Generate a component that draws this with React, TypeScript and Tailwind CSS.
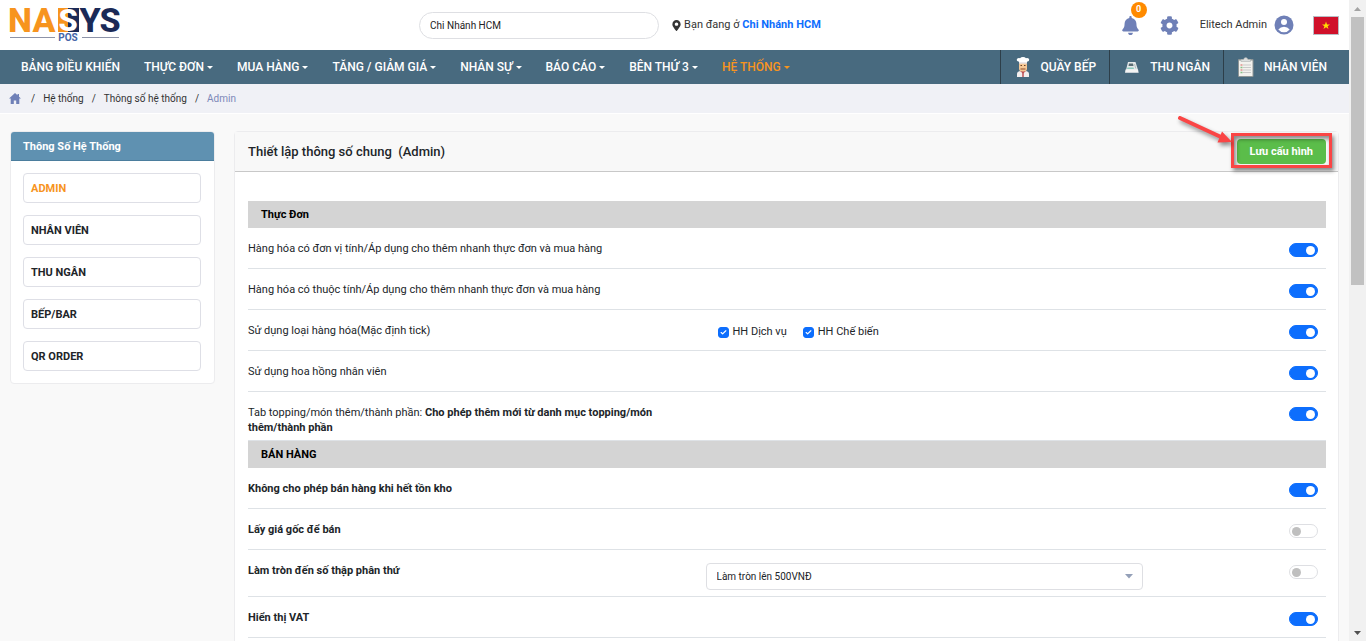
import React, { useState } from 'react';
import { FaBell, FaCog, FaMapMarkerAlt } from 'react-icons/fa';
import { Check } from 'lucide-react';

const menuItems = [
  { label: 'BẢNG ĐIỀU KHIỂN', caret: false },
  { label: 'THỰC ĐƠN', caret: true },
  { label: 'MUA HÀNG', caret: true },
  { label: 'TĂNG / GIẢM GIÁ', caret: true },
  { label: 'NHÂN SỰ', caret: true },
  { label: 'BÁO CÁO', caret: true },
  { label: 'BÊN THỨ 3', caret: true },
  { label: 'HỆ THỐNG', caret: true, active: true },
];

const sideItems = ['ADMIN', 'NHÂN VIÊN', 'THU NGÂN', 'BẾP/BAR', 'QR ORDER'];

const Logo = () => (
  <svg width="124" height="50" viewBox="0 0 124 50" role="img" aria-label="NASYS POS">
    <rect x="58" y="8" width="10" height="24" fill="#f7941e" />
    <rect x="68" y="8" width="11" height="24" fill="#1b2a57" />
    <g fontFamily="Roboto, sans-serif" fontWeight="800" fontSize="34" textAnchor="middle">
      <text x="20" y="32" fill="#f7941e">N</text>
      <text x="44" y="32" fill="#f7941e">A</text>
      <text x="68" y="31" fontSize="31" fill="#ffffff">S</text>
      <text x="90" y="32" fill="#1b2a57">Y</text>
      <text x="110" y="32" fill="#1b2a57">S</text>
    </g>
    <path d="M10 37.5h45M82 37.5h37" stroke="#8d93a8" />
    <text x="68" y="41" textAnchor="middle" fontFamily="Roboto, sans-serif" fontWeight="700" fontSize="10" fill="#4565a8">POS</text>
  </svg>
);

const Caret = () => (
  <svg width="6" height="3" viewBox="0 0 6 3" className="ml-[3px]" aria-hidden="true">
    <path d="M0 0h6L3 3z" fill="currentColor" />
  </svg>
);

const ChefIcon = () => (
  <svg width="20" height="20" viewBox="0 0 20 20" aria-hidden="true">
    <path d="M4 20v-3q0-2.500 3-3h6q3 .5 3 3v3z" fill="#f4eeee" />
    <path d="M7 14h6l-3 2.500z" fill="#b9454b" />
    <path d="M9.300 16h1.400v4H9.300z" fill="#b9454b" />
    <rect x="6" y="5" width="8" height="9.500" rx="3" fill="#f5c795" />
    <path d="M7.500 11.500h5v1h-5z" fill="#8a4a2c" />
    <path d="M7.500 8.500h1.500M11 8.500h1.500" stroke="#6b4326" />
    <path d="M6 6.500V4.800Q3.500 4.500 3.800 2.500 4.500.8 7 1.200 8 0 10 0t3 1.200q2.500-.4 3.200 1.300.3 2-2.200 2.300v1.700z" fill="#fff" />
    <path d="M6 6h8" stroke="#d5cdd0" />
  </svg>
);

const RegisterIcon = () => (
  <svg width="20" height="20" viewBox="0 0 20 20" aria-hidden="true">
    <path d="M6 5h7.500l2.500 8H4z" fill="#e4e9ea" />
    <path d="M7 6.500h4l.5 2.500H6.500z" fill="#5a6d74" />
    <path d="M5.500 10.500h6l.5 1.500H5z" fill="#8ccabd" />
    <path d="M12.500 7l1.300 4.500" stroke="#b5bdbf" />
    <path d="M3.500 12.500h12.500l.7 3.300H3z" fill="#f4f4f4" />
  </svg>
);

const ClipboardIcon = () => (
  <svg width="20" height="20" viewBox="0 0 20 20" aria-hidden="true">
    <rect x="2" y="2" width="15.500" height="18" rx="1" fill="#8f9696" />
    <rect x="3" y="3.500" width="13.500" height="15.500" fill="#f3f2ee" />
    <path d="M5 4.500V2.500h2.500Q8 .5 9.700.5t2.200 2h2.600v2z" fill="#dcdede" stroke="#a3a8a8" strokeWidth=".5" />
    <path d="M7 8h8M7 10.500h8M7 13h8M7 15.500h8" stroke="#c9c9c9" />
    <path d="M4.500 8h2M4.500 13h2" stroke="#e0908a" strokeWidth="1.500" />
    <path d="M4.500 10.500h2M4.500 15.500h2" stroke="#88c087" strokeWidth="1.500" />
  </svg>
);

const quickLinks = [
  { label: 'QUẦY BẾP', icon: <ChefIcon /> },
  { label: 'THU NGÂN', icon: <RegisterIcon /> },
  { label: 'NHÂN VIÊN', icon: <ClipboardIcon /> },
];

const Switch = ({ id, defaultOn }: { id: string; defaultOn: boolean }) => {
  const [on, setOn] = useState(defaultOn);
  return (
    <input
      id={id}
      type="checkbox"
      role="switch"
      checked={on}
      onChange={() => setOn(!on)}
      className="flex h-3.5 w-[29px] shrink-0 cursor-pointer appearance-none items-center rounded-full border border-[#dedfe3] bg-white px-0.5 before:size-[9px] before:rounded-full before:bg-[#bfbfbf] before:content-[''] checked:justify-end checked:border-[#0d6efd] checked:bg-[#0d6efd] checked:before:bg-white"
    />
  );
};

const TickBox = ({ label }: { label: string }) => (
  <label className="flex cursor-pointer items-center gap-1 text-[11px]">
    <span className="relative flex">
      <input type="checkbox" defaultChecked className="peer size-[11px] appearance-none rounded-[3px] border border-[#bfbfbf] checked:border-[#0d6efd] checked:bg-[#0d6efd]" />
      <Check size={7} strokeWidth={4} className="pointer-events-none absolute left-0.5 top-0.5 hidden text-white peer-checked:block" />
    </span>
    {label}
  </label>
);

interface RowProps {
  id: string;
  label: React.ReactNode;
  on?: boolean;
  children?: React.ReactNode;
}

const SettingRow = ({ id, label, on = true, children }: RowProps) => (
  <div className="grid min-h-[41px] grid-cols-12 gap-x-5 border-b border-[#dee2e6] pb-[5px] pt-[13px]">
    <label htmlFor={id} className="col-span-5 leading-[15px]">{label}</label>
    <div className="col-span-5">{children}</div>
    <div className="col-span-2 flex items-start justify-end pr-2 pt-0.5">
      <Switch id={id} defaultOn={on} />
    </div>
  </div>
);

const SectionTitle = ({ children }: { children: React.ReactNode }) => (
  <h2 className="bg-[#d4d4d4] px-[13px] text-[11px] font-bold leading-[27px] text-black">{children}</h2>
);

const Header = () => (
  <header className="flex h-[50px] items-center bg-white pr-2.5 text-[11px] text-[#333]">
    <div className="w-[31.3%]">
      <a href="#" className="block w-fit"><Logo /></a>
    </div>
    <select aria-label="Chi nhánh" className="h-[27px] w-60 appearance-none rounded-full border border-[#dedfe3] bg-white px-2.5 text-[10px] text-[#222]">
      <option>Chi Nhánh HCM</option>
    </select>
    <p className="ml-3 flex items-center gap-0.5 whitespace-nowrap">
      <FaMapMarkerAlt size={11} />
      <span>Bạn đang ở <a href="#" className="font-bold text-[#0d6efd]">Chi Nhánh HCM</a></span>
    </p>

    <div className="ml-auto flex items-center">
      <button aria-label="Thông báo" className="relative mr-5 text-[#6f80b7]">
        <FaBell size={19} />
        <span className="absolute -top-3.5 left-2.5 flex size-4 items-center justify-center rounded-full bg-[#ff8a00] text-[9px] font-bold text-white">0</span>
      </button>
      <button aria-label="Cài đặt" className="mr-[21px] text-[#6f80b7]"><FaCog size={19} /></button>
      <a href="#" className="mr-[19px] flex items-center gap-[7px]">
        Elitech Admin
        <svg width="20" height="20" viewBox="0 0 20 20" className="text-[#6f80b7]" aria-hidden="true">
          <circle cx="10" cy="10" r="9.500" fill="currentColor" />
          <circle cx="10" cy="7" r="3" fill="#fff" />
          <path d="M4.300 14.500Q6.500 11.700 10 11.700t5.700 2.800Q13.500 17.300 10 17.300t-5.700-2.800z" fill="#fff" />
        </svg>
      </a>
      <button aria-label="Tiếng Việt">
        <svg width="26" height="19" viewBox="0 0 26 19" aria-hidden="true">
          <rect x=".5" y=".5" width="25" height="18" fill="#d0102a" stroke="#b9bcc4" />
          <path d="M13 5.500l1 2.900h3l-2.400 1.800.9 2.900-2.500-1.800-2.500 1.800.9-2.900L9 8.400h3z" fill="#ffde00" />
        </svg>
      </button>
    </div>
  </header>
);

const NavBar = () => (
  <nav className="flex h-[34px] items-stretch bg-[#486a7f] pl-[9px] pr-[9px] text-[12px] font-medium text-white">
    {menuItems.map((item) => (
      <a
        key={item.label}
        href="#"
        className={`flex items-center whitespace-nowrap px-3 ${item.active ? 'text-[#f7941e]' : ''}`}
      >
        {item.label}
        {item.caret && <Caret />}
      </a>
    ))}
    <div className="ml-auto flex">
      {quickLinks.map((link) => (
        <a key={link.label} href="#" className="flex items-center gap-2 whitespace-nowrap border-l border-[#2d3e49] pl-3 pr-[13px]">
          {link.icon}
          {link.label}
        </a>
      ))}
    </div>
  </nav>
);

const Breadcrumb = () => (
  <div className="flex h-[30px] items-center gap-2 border-b border-white bg-[#f0f1f6] pl-[9px] text-[10px] text-[#333]">
    <a href="#" aria-label="Trang chủ" className="mr-0.5">
      <svg width="12" height="11" viewBox="0 0 12 11" fill="#6f80b7" aria-hidden="true">
        <path d="M6 0l2.500 2.300V1H10v2.700L12 5.600h-1.700V11H7.200V7.500H4.800V11H1.700V5.600H0z" />
      </svg>
    </a>
    <span>/</span>
    <a href="#">Hệ thống</a>
    <span>/</span>
    <a href="#">Thông số hệ thống</a>
    <span>/</span>
    <span className="text-[#7c88b8]">Admin</span>
  </div>
);

const Sidebar = () => (
  <aside className="w-[205px] shrink-0 overflow-hidden rounded border border-[#ececee] bg-white">
    <h2 className="border-b border-[#4b7d9d] bg-[#5f91b1] px-3 pt-0.5 text-[11px] font-bold leading-[26px] text-white">Thông Số Hệ Thống</h2>
    <ul className="flex flex-col gap-3 py-3 pl-3 pr-[13px]">
      {sideItems.map((item, i) => (
        <li key={item}>
          <a
            href="#"
            className={`flex h-[30px] items-center rounded border border-[#dedfe6] px-[7px] pt-0.5 text-[11px] font-bold ${i === 0 ? 'text-[#f7941e]' : 'text-[#212529]'}`}
          >
            {item}
          </a>
        </li>
      ))}
    </ul>
  </aside>
);

// Red frame and arrow that point at the save button
const SaveCallout = () => (
  <>
    <span className="pointer-events-none absolute -inset-x-1.5 -bottom-1 -top-1.5 border-3 border-[#fa4545] shadow-[2px_3px_4px_rgba(0,0,0,0.45),inset_2px_3px_4px_rgba(0,0,0,0.45)]" />
    <svg width="62" height="36" viewBox="0 0 62 36" className="pointer-events-none absolute -top-6 right-[89px] drop-shadow-[2px_3px_2px_rgba(0,0,0,0.45)]" aria-hidden="true">
      <path d="M5 3L46 22" stroke="#fa4545" strokeWidth="4" strokeLinecap="round" />
      <path d="M47 16.500L57 27l-14.500.5z" fill="#fa4545" />
    </svg>
  </>
);

const App = () => {
  return (
    <div className="flex h-screen overflow-hidden bg-[#f9f9f9] font-[Roboto,'Noto_Sans',sans-serif] text-[#212529]">
      <div className="flex min-w-0 flex-1 flex-col">
        <Header />
        <NavBar />
        <Breadcrumb />

        <main className="flex min-h-0 flex-1 items-start gap-[19px] overflow-hidden px-2.5 pt-[17px]">
          <Sidebar />
          <section className="min-w-0 flex-1 rounded-t border border-[#ececee] bg-white pb-5">
            <div className="flex h-10 items-center justify-between border-b border-[#c8c8c8] bg-[#f8f8f8] pl-[13px] pr-3">
              <h1 className="whitespace-pre text-[13px] font-medium">Thiết lập thông số chung  (Admin)</h1>
              <div className="relative">
                <button className="block h-[25px] rounded bg-[#5bbd4a] px-[13px] pt-0.5 text-[11px] font-bold text-white">Lưu cấu hình</button>
                <SaveCallout />
              </div>
            </div>

            <div className="pl-[13px] pr-3 pt-[29px] text-[11px]">
              <SectionTitle>Thực Đơn</SectionTitle>
              <SettingRow id="unit" label="Hàng hóa có đơn vị tính/Áp dụng cho thêm nhanh thực đơn và mua hàng" />
              <SettingRow id="attribute" label="Hàng hóa có thuộc tính/Áp dụng cho thêm nhanh thực đơn và mua hàng" />
              <SettingRow id="type" label="Sử dụng loại hàng hóa(Mặc định tick)">
                <div className="flex gap-4 pl-3 pt-px">
                  <TickBox label="HH Dịch vụ" />
                  <TickBox label="HH Chế biến" />
                </div>
              </SettingRow>
              <SettingRow id="commission" label="Sử dụng hoa hồng nhân viên" />
              <SettingRow
                id="topping"
                label={<>Tab topping/món thêm/thành phần: <b>Cho phép thêm mới từ danh mục topping/món thêm/thành phần</b></>}
              />

              <SectionTitle>BÁN HÀNG</SectionTitle>
              <SettingRow id="stock" label={<b>Không cho phép bán hàng khi hết tồn kho</b>} />
              <SettingRow id="cost" on={false} label={<b>Lấy giá gốc để bán</b>} />
              <SettingRow id="round" on={false} label={<b>Làm tròn đến số thập phân thứ</b>}>
                <div className="relative pb-px">
                  <select aria-label="Làm tròn" className="block h-[27px] w-full appearance-none rounded border border-[#dedfe3] bg-white px-2.5 text-[10px]">
                    <option>Làm tròn lên 500VNĐ</option>
                  </select>
                  <svg width="8" height="5" viewBox="0 0 8 5" className="pointer-events-none absolute right-2.5 top-[11px] text-[#94a0b8]" aria-hidden="true">
                    <path d="M0 0h8L4 4.500z" fill="currentColor" />
                  </svg>
                </div>
              </SettingRow>
              <SettingRow id="vat" label={<b>Hiển thị VAT</b>} />
            </div>
          </section>
        </main>
      </div>

      {/* Scrollbar */}
      <div className="flex w-[17px] shrink-0 flex-col items-center justify-between bg-[#f1f1f1]" aria-hidden="true">
        <div className="flex h-full w-full flex-col items-center">
          <svg width="17" height="17" viewBox="0 0 17 17" className="shrink-0">
            <path d="M5 11h7L8.500 7z" fill="#a3a3a3" />
          </svg>
          <div className="h-[43%] w-[13px] bg-[#c1c1c1]" />
        </div>
        <svg width="17" height="17" viewBox="0 0 17 17" className="shrink-0">
          <path d="M5 7h7l-3.500 4z" fill="#505050" />
        </svg>
      </div>
    </div>
  );
};

export default App;
